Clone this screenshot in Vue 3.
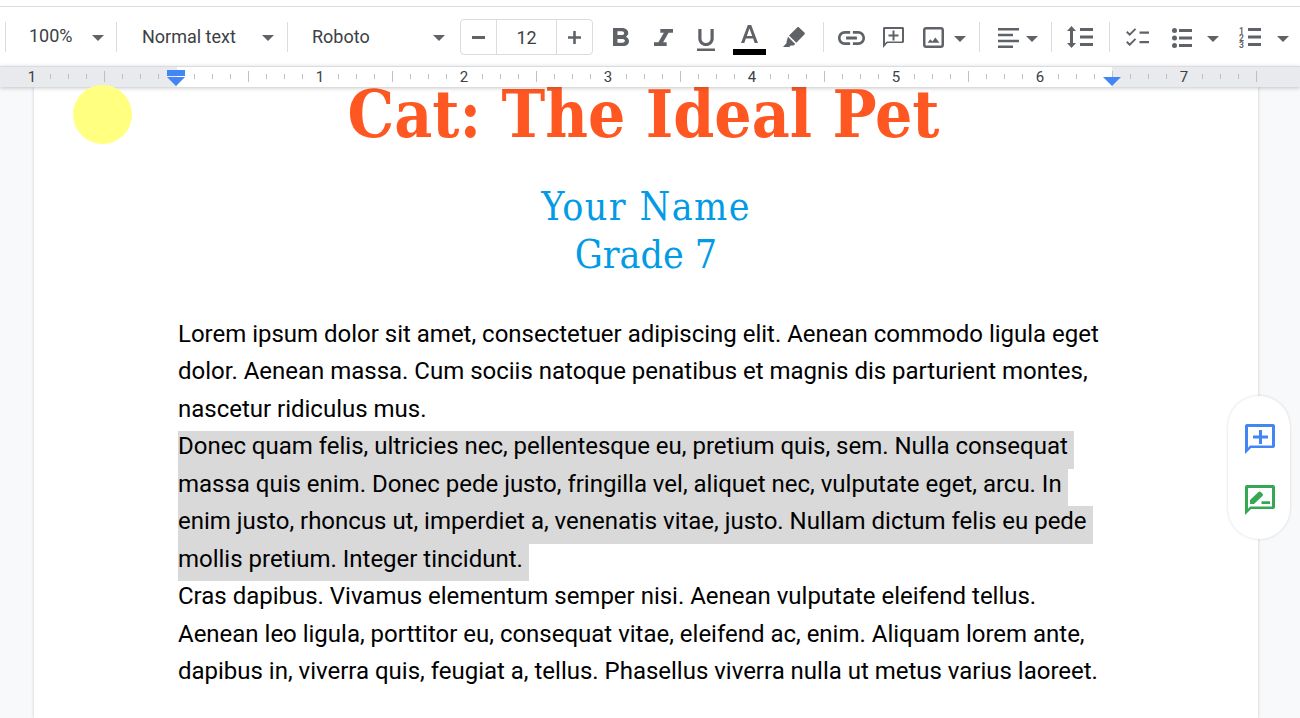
<template>
  <div class="app">
    <div class="topline"></div>
    <div class="toolbar">
      <span class="sep first"></span>
      <div class="select zoom"><span class="pct">100%</span><i class="caret"></i></div>
      <span class="sep"></span>
      <div class="select style"><span>Normal text</span><i class="caret"></i></div>
      <span class="sep"></span>
      <div class="select font"><span>Roboto</span><i class="caret"></i></div>
      <div class="sizer">
        <div class="step">
          <svg width="13" height="3" viewBox="0 0 13 3"><path d="M0 0h13v3H0z" /></svg>
        </div>
        <div class="size">12</div>
        <div class="step">
          <svg width="13" height="13" viewBox="0 0 13 13"><path d="M0 5.200h5.200V0h2.600v5.200H13v2.600H7.800V13H5.200V7.800H0z" /></svg>
        </div>
      </div>
      <svg class="i-bold" width="16" height="18" viewBox="7 4 10.750 14" preserveAspectRatio="none"><path d="M15.600 10.790c.97-.67 1.650-1.770 1.650-2.790 0-2.260-1.750-4-4-4H7v14h7.040c2.090 0 3.710-1.700 3.710-3.790 0-1.520-.86-2.820-2.150-3.420zM10 6.500h3c.83 0 1.500.67 1.500 1.500s-.67 1.500-1.500 1.500h-3zm3.500 9H10v-3h3.500c.83 0 1.500.67 1.500 1.500s-.67 1.500-1.500 1.500z" /></svg>
      <svg class="i-italic" width="19" height="17" viewBox="6 4 12 14" preserveAspectRatio="none"><path d="M10 4v3h2.210l-3.420 8H6v3h8v-3h-2.210l3.420-8H18V4z" /></svg>
      <svg class="i-under" width="18" height="22" viewBox="5 3 14 18" preserveAspectRatio="none"><path d="M12 17c3.310 0 6-2.690 6-6V3h-2.500v8c0 1.930-1.570 3.500-3.500 3.500S8.500 12.930 8.500 11V3H6v8c0 3.310 2.690 6 6 6zm-7 2v2h14v-2z" /></svg>
      <div class="textcolor">
        <svg width="17" height="18" viewBox="0 0 17 18"><path d="M6.800 0h3.400l6.800 18h-3.300l-1.600-4.500H4.900L3.300 18H0zM5.800 11h5.400L8.500 3.600z" /></svg>
        <div class="bar"></div>
      </div>
      <svg class="i-marker" width="22" height="20" viewBox="0 0 22 20"><path d="M14.200.5c.6-.6 1.300-.6 1.900 0l5.300 5.100c.6.6.6 1.300 0 1.900L13.300 15.800 6 8.500zM5 9.700l7.200 7.300-1.600 1.600H7.700L6.300 20H0l3.800-4.300-.4-.8z" /></svg>
      <span class="sep s-link"></span>
      <svg class="i-link" width="27" height="14" viewBox="2 7 20 10" preserveAspectRatio="none"><path d="M3.900 12c0-1.710 1.390-3.100 3.100-3.100h4V7H7c-2.760 0-5 2.240-5 5s2.240 5 5 5h4v-1.900H7c-1.710 0-3.100-1.390-3.100-3.100zM8 13h8v-2H8zm9-6h-4v1.900h4c1.710 0 3.100 1.390 3.100 3.100s-1.390 3.100-3.100 3.100h-4V17h4c2.760 0 5-2.240 5-5s-2.240-5-5-5z" /></svg>
      <svg class="i-comment" width="21" height="21" viewBox="0 0 21 21"><path fill-rule="evenodd" d="M1.500 0h18c.8 0 1.500.7 1.500 1.500v13c0 .8-.7 1.500-1.500 1.500H4.500L0 21V1.500C0 .7.700 0 1.500 0zM2 2v14.200l1.800-1.700H19V2zM9.500 3.500h2v4h4v2h-4v4h-2v-4h-4v-2h4z" /></svg>
      <svg class="i-image" width="21" height="21" viewBox="0 0 21 21"><path fill-rule="evenodd" d="M3 0h15c1.700 0 3 1.300 3 3v15c0 1.700-1.300 3-3 3H3c-1.700 0-3-1.300-3-3V3c0-1.700 1.300-3 3-3zm0 2.500c-.3 0-.5.2-.5.500v15c0 .3.2.5.500.5h15c.3 0 .5-.2.500-.5V3c0-.3-.2-.5-.5-.5zM4.500 15.800l2.900-3.600 2 2.300 2.900-3.900 4.200 5.200z" /></svg>
      <i class="caret c-image"></i>
      <span class="sep s-align"></span>
      <svg class="i-align" width="21" height="20" viewBox="0 0 21 20"><path d="M0 0h21v2.500H0zM0 5.800h15v2.500H0zM0 11.700h21v2.500H0zM0 17.500h15V20H0z" /></svg>
      <i class="caret c-align"></i>
      <span class="sep s-space"></span>
      <svg class="i-space" width="26" height="22" viewBox="0 0 26 22"><path d="M4.500 0L9 5H6v12h3l-4.500 5L0 17h3V5H0zM13 2h13v3H13zM13 9.500h13v3H13zM13 17h13v3H13z" /></svg>
      <span class="sep s-check"></span>
      <svg class="i-check" width="23" height="18" viewBox="0 0 23 18"><path d="M.8 3.800l2.900 2.900L9.500.9M.8 13.800l2.900 2.900 5.800-5.800" fill="none" stroke="#5f6368" stroke-width="2" /><path d="M13.500 3.500H23v2.200h-9.500zM13.500 13H23v2.200h-9.500z" /></svg>
      <svg class="i-bullet" width="20" height="20" viewBox="0 0 20 20"><circle cx="2.500" cy="2.500" r="2.500" /><circle cx="2.500" cy="10" r="2.500" /><circle cx="2.500" cy="17.500" r="2.500" /><path d="M7 1h13v3H7zM7 8.500h13v3H7zM7 16h13v3H7z" /></svg>
      <i class="caret c-bullet"></i>
      <svg class="i-number" width="22" height="21" viewBox="0 0 22 21"><text x="0" y="6.500" class="num">1</text><text x="0" y="13.500" class="num">2</text><text x="0" y="20.500" class="num">3</text><path d="M9 1h13v3H9zM9 8.500h13v3H9zM9 16h13v3H9z" /></svg>
      <i class="caret c-number"></i>
    </div>
    <svg class="ruler" width="1300" height="21" viewBox="0 0 1300 21">
      <rect width="1300" height="21" fill="#e8eaed" />
      <rect x="177" width="935" height="21" fill="#fff" />
      <rect width="1300" height="1" fill="#dadce0" />
      <rect
        v-for="t in ticks"
        :key="t.x"
        :x="t.x"
        :y="t.major ? 5 : 8"
        width="1"
        :height="t.major ? 11 : 5"
        fill="#bdc1c6" />
      <text
        v-for="l in labels"
        :key="l.x"
        :x="l.x"
        y="16"
        text-anchor="middle"
        class="rlabel">{{ l.text }}</text>
      <path d="M167 4h18v6h-18zM167 11h18l-9 9z" fill="#4285f4" />
      <path d="M1103 11h18l-9 9z" fill="#4285f4" />
    </svg>
    <div class="canvas">
      <div class="page">
        <h1>Cat: The Ideal Pet</h1>
        <h2><span class="name">Your Name</span><br />Grade 7</h2>
        <div class="body">
          <div v-for="(line, i) in lines" :key="i" class="line">
            <span :class="{ sel: line.sel }">{{ line.text }}</span>
          </div>
        </div>
      </div>
      <div class="side">
        <svg width="30" height="30" viewBox="0 0 30 30"><path fill-rule="evenodd" d="M2 0h26c1.100 0 2 .9 2 2v20c0 1.100-.9 2-2 2H6l-6 6V2C0 .9.900 0 2 0zm1 3v20.800L5 21.500h22V3zM14 6h3v5.500h6v3h-6V20h-3v-5.500H8v-3h6z" fill="#4285f4" /></svg>
        <svg width="30" height="30" viewBox="0 0 30 30"><path fill-rule="evenodd" d="M2 0h26c1.100 0 2 .9 2 2v20c0 1.100-.9 2-2 2H6l-6 6V2C0 .9.900 0 2 0zm1 3v20.800L5 21.500h22V3zM5 19v-4l8.500-8c.7-.7 1.600-.7 2.300 0l1.700 1.700c.7.7.7 1.600 0 2.300L9 19zM16.500 16.200h8.500V19h-8.500z" fill="#34a853" /></svg>
      </div>
    </div>
    <div class="pointer"></div>
  </div>
</template>

<script setup>
const ticks = [];
for (let x = 50; x <= 1256; x += 18) {
  const fromInch = (x - 176 + 144 * 2) % 144;
  if (fromInch === 0) continue; // inch marks carry a number instead
  ticks.push({ x, major: fromInch === 72 });
}

const labels = [
  { x: 32, text: "1" },
  ...[1, 2, 3, 4, 5, 6, 7].map((n) => ({ x: 176 + n * 144, text: String(n) })),
];

const lines = [
  { text: "Lorem ipsum dolor sit amet, consectetuer adipiscing elit. Aenean commodo ligula eget" },
  { text: "dolor. Aenean massa. Cum sociis natoque penatibus et magnis dis parturient montes," },
  { text: "nascetur ridiculus mus." },
  { text: "Donec quam felis, ultricies nec, pellentesque eu, pretium quis, sem. Nulla consequat ", sel: true },
  { text: "massa quis enim. Donec pede justo, fringilla vel, aliquet nec, vulputate eget, arcu. In ", sel: true },
  { text: "enim justo, rhoncus ut, imperdiet a, venenatis vitae, justo. Nullam dictum felis eu pede ", sel: true },
  { text: "mollis pretium. Integer tincidunt. ", sel: true },
  { text: "Cras dapibus. Vivamus elementum semper nisi. Aenean vulputate eleifend tellus." },
  { text: "Aenean leo ligula, porttitor eu, consequat vitae, eleifend ac, enim. Aliquam lorem ante," },
  { text: "dapibus in, viverra quis, feugiat a, tellus. Phasellus viverra nulla ut metus varius laoreet." },
];
</script>

<style scoped>
.app {
  width: 1300px;
  height: 718px;
  position: relative;
  display: flex;
  flex-direction: column;
  overflow: hidden;
  background: #f8f9fa;
  font-family: Roboto, sans-serif;
}

.topline {
  height: 7px;
  flex: none;
  box-sizing: border-box;
  background: #fff;
  border-bottom: 1px solid #dadce0;
}

.toolbar {
  height: 59px;
  flex: none;
  display: flex;
  align-items: center;
  background: #fff;
  color: #3c4043;
  font-size: 18px;
}

.toolbar svg {
  flex: none;
  fill: #5f6368;
}

.sep {
  width: 1px;
  height: 30px;
  background: #dadce0;
  flex: none;
}

.first {
  margin-left: 5px;
}

.select {
  display: flex;
  align-items: center;
  justify-content: space-between;
  height: 30px;
  flex: none;
  box-sizing: border-box;
}

.pct {
  margin-bottom: 2px;
}

.zoom {
  width: 110px;
  padding: 0 12px 0 23px;
}

.style {
  width: 170px;
  padding: 0 13px 0 25px;
}

.font {
  width: 158px;
  padding: 0 1px 0 24px;
}

.caret {
  width: 0;
  height: 0;
  margin-top: 2px;
  border-left: 6.5px solid transparent;
  border-right: 6.5px solid transparent;
  border-top: 6.5px solid #5f6368;
  flex: none;
}

.sizer {
  display: flex;
  height: 36px;
  width: 133px;
  margin: 1px 0 0 14px;
  flex: none;
  border: 1px solid #dadce0;
  border-radius: 4px;
  box-sizing: border-box;
}

.step {
  width: 35px;
  display: flex;
  align-items: center;
  justify-content: center;
}

.size {
  width: 61px;
  box-sizing: border-box;
  border-left: 1px solid #dadce0;
  border-right: 1px solid #dadce0;
  display: flex;
  align-items: center;
  justify-content: center;
  font-size: 18px;
}

.i-bold {
  margin: 1px 0 0 20px;
}

.i-italic {
  margin: 2px 0 0 25px;
}

.i-under {
  margin: 7px 0 0 24px;
}

.textcolor {
  display: flex;
  flex-direction: column;
  align-items: center;
  flex: none;
  width: 33px;
  margin: 7px 0 0 18px;
  gap: 6px;
}

.bar {
  width: 33px;
  height: 6px;
  background: #000;
}

.i-marker {
  margin-left: 17px;
}

.s-link {
  margin-left: 18px;
}

.i-link {
  margin: 2px 0 0 14px;
}

.i-comment {
  margin: 2px 0 0 18px;
}

.i-image {
  margin: 2px 0 0 19px;
}

.c-image {
  margin: 4px 0 0 10px;
}

.s-align {
  margin-left: 13px;
}

.i-align {
  margin: 2px 0 0 18px;
}

.c-align {
  margin: 4px 0 0 7px;
}

.s-space {
  margin-left: 13px;
}

.i-space {
  margin: 1px 0 0 15px;
}

.s-check {
  margin-left: 16px;
}

.i-check {
  margin: 1px 0 0 16px;
}

.i-bullet {
  margin: 2px 0 0 23px;
}

.c-bullet {
  margin: 4px 0 0 15px;
}

.i-number {
  margin: 2px 0 0 20px;
}

.c-number {
  margin: 4px 0 0 16px;
}

.num {
  font-size: 8.5px;
  font-weight: 700;
}

.ruler {
  display: block;
  flex: none;
  position: relative;
  z-index: 2;
  box-shadow: 0 1px 4px rgba(60, 64, 67, 0.3);
}

.rlabel {
  font-size: 15px;
  fill: #3c4043;
}

.canvas {
  flex: 1;
  position: relative;
  overflow: hidden;
  min-height: 0;
}

.page {
  width: 1224px;
  margin-left: 34px;
  height: 100%;
  box-sizing: border-box;
  background: #fff;
  padding: 0 144px;
  display: flow-root;
  box-shadow: 0 0 3px rgba(60, 64, 67, 0.25);
}

h1 {
  margin: 0;
  padding-right: 5px;
  text-align: center;
  font-family: "DejaVu Serif", serif;
  font-stretch: condensed;
  font-weight: 700;
  font-size: 65.3px;
  line-height: 54px;
  color: #ff5722;
}

h2 {
  margin: 42px 0 0;
  text-align: center;
  font-family: "DejaVu Serif", serif;
  font-stretch: condensed;
  font-weight: 400;
  font-size: 39px;
  line-height: 48px;
  color: #039be5;
}

.name {
  letter-spacing: 1.4px;
}

.body {
  margin-top: 39.5px;
  font-size: 24px;
  letter-spacing: -0.01px;
  color: #000;
}

.line {
  height: 37.5px;
  line-height: 31.5px;
  white-space: pre;
}

.sel {
  display: inline-block;
  padding-bottom: 6px;
  background: #d9d9d9;
}

.side {
  position: absolute;
  left: 1228px;
  top: 309px;
  width: 62px;
  height: 143px;
  padding: 28px 0 0 2px;
  box-sizing: border-box;
  background: #fff;
  border-radius: 31px;
  box-shadow: 0 0 3px rgba(60, 64, 67, 0.2);
  display: flex;
  flex-direction: column;
  align-items: center;
  gap: 31px;
}

.pointer {
  position: absolute;
  left: 73px;
  top: 85px;
  z-index: 3;
  width: 59px;
  height: 59px;
  border-radius: 50%;
  background: #ffff80;
}
</style>
<style>
html,
body {
  margin: 0;
}
</style>
